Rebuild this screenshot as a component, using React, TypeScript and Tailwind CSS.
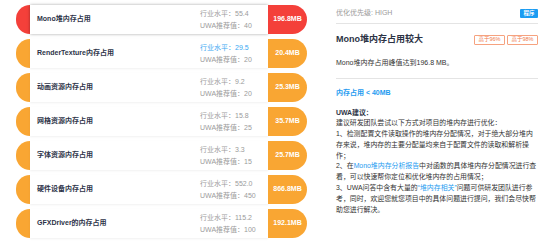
import React from "react";

type Level = "red" | "orange";

interface Metric {
  name: string;
  industry: string;
  recommend: string;
  value: string;
  level: Level;
  highlight?: boolean;
  selected?: boolean;
}

const metrics: Metric[] = [
  { name: "Mono堆内存占用", industry: "55.4", recommend: "40", value: "196.8MB", level: "red", selected: true },
  { name: "RenderTexture内存占用", industry: "29.5", recommend: "20", value: "20.4MB", level: "orange", highlight: true },
  { name: "动画资源内存占用", industry: "9.2", recommend: "20", value: "25.3MB", level: "orange" },
  { name: "网格资源内存占用", industry: "15.8", recommend: "25", value: "35.7MB", level: "orange" },
  { name: "字体资源内存占用", industry: "3.3", recommend: "15", value: "25.7MB", level: "orange" },
  { name: "硬件设备内存占用", industry: "552.0", recommend: "450", value: "866.8MB", level: "orange" },
  { name: "GFXDriver的内存占用", industry: "115.2", recommend: "100", value: "192.1MB", level: "orange" },
];

const font = "[font-family:'Liberation_Sans','Noto_Sans_CJK_SC',sans-serif]";

function MetricRow({ m }: { m: Metric }) {
  const bg = m.level === "red" ? "bg-[#f4403a]" : "bg-[#f9a633]";
  return (
    <div className="flex h-[29px] w-[291px]">
      <div className={`w-[14px] shrink-0 rounded-l-full ${bg}`} />
      <div
        className={`flex flex-1 items-center bg-white pl-[7px] ${
          m.selected
            ? "shadow-[0_0_3px_rgba(0,0,0,0.35)]"
            : "shadow-[0_1px_2px_rgba(0,0,0,0.06)]"
        }`}
      >
        <div className="flex-1 text-[7px] font-bold text-[#2d3348]">{m.name}</div>
        <div className="w-[68px] text-[7px] leading-[12px] text-[#9b9b9b]">
          <div className={m.highlight ? "text-[#3aa8f2]" : ""}>行业水平：{m.industry}</div>
          <div>UWA推荐值：{m.recommend}</div>
        </div>
      </div>
      <div
        className={`flex w-[39px] shrink-0 items-center justify-center rounded-r-full text-[7px] font-bold text-white ${bg}`}
      >
        {m.value}
      </div>
    </div>
  );
}

function Tag({ children }: { children: React.ReactNode }) {
  return (
    <span className="flex h-[10px] w-[31px] items-center justify-center rounded-[1px] border border-[#f6a27f] text-[5.5px] text-[#f0794a]">
      {children}
    </span>
  );
}

export default function App() {
  return (
    <div className={`flex h-[242px] w-[550px] overflow-hidden bg-white ${font}`}>
      <div className="flex w-[307px] shrink-0 flex-col gap-[5px] pl-[16px] pt-[5px]">
        {metrics.map((m) => (
          <MetricRow key={m.name} m={m} />
        ))}
      </div>

      <div className="ml-[29px] w-[202px] shrink-0 pt-[8px]">
        <div className="flex items-center justify-between border-b border-[#e4e4e4] pb-[4px]">
          <span className="text-[7px] text-[#9a9a9a]">优化优先级: HIGH</span>
          <span className="flex h-[9px] w-[18px] items-center justify-center rounded-[1px] bg-[#1b9cf2] text-[5.5px] font-bold text-white">
            程序
          </span>
        </div>

        <div className="mt-[10px] flex h-[12px] items-center justify-between">
          <span className="text-[9px] font-semibold text-[#2c3345]">Mono堆内存占用较大</span>
          <div className="flex gap-[2px]">
            <Tag>高于96%</Tag>
            <Tag>高于98%</Tag>
          </div>
        </div>

        <div className="mt-[12px] border-b border-[#e4e4e4] pb-[10px] text-[7px] leading-[10px] text-[#333]">
          Mono堆内存占用峰值达到196.8 MB。
        </div>

        <div className="mt-[9px] text-[7px] font-semibold leading-[10px] text-[#1e9bf0]">
          内存占用 &lt; 40MB
        </div>

        <div className="mt-[10px] whitespace-nowrap text-[6.9px] leading-[10.8px] text-[#333]">
          <div className="font-bold text-[#2c3345]">UWA建议：</div>
          <div>建议研发团队尝试以下方式对项目的堆内存进行优化：</div>
          <div>
            1、检测配置文件读取操作的堆内存分配情况，对于绝大部分堆内
            <br />
            存来说，堆内存的主要分配量均来自于配置文件的读取和解析操
            <br />
            作；
          </div>
          <div>
            2、在<span className="text-[#1e9bf0]">Mono堆内存分析报告</span>中对函数的具体堆内存分配情况进行查
            <br />
            看，可以快速帮你定位和优化堆内存的占用情况；
          </div>
          <div>
            3、UWA问答中含有大量的<span className="text-[#1e9bf0]">“堆内存相关”</span>问题可供研发团队进行参
            <br />
            考，同时，欢迎您就您项目中的具体问题进行提问，我们会尽快帮
            <br />
            助您进行解决。
          </div>
        </div>
      </div>
    </div>
  );
}
